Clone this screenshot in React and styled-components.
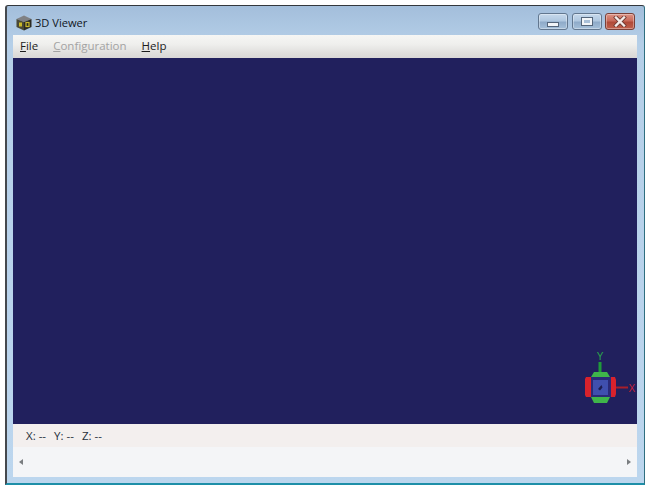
import React from 'react'
import styled, { createGlobalStyle } from 'styled-components'

const GlobalStyle = createGlobalStyle`
html, body {
    margin: 0;
    padding: 0;
    background: #fff;
}
`

const Page = styled.div`
width: 656px;
height: 489px;
box-sizing: border-box;
padding: 5px 11px 4px 5px;
overflow: hidden;
font-family: "Open Sans", "Noto Sans", sans-serif;
`

const Frame = styled.div`
height: 100%;
box-sizing: border-box;
display: flex;
flex-direction: column;
border-top: 1px solid #33373c;
border-left: 2px solid #45494e;
border-right: 1px solid #2f6f80;
border-bottom: 2px solid #1e8fa8;
border-radius: 3px 3px 0 0;
padding: 0 7px 6px 6px;
background: linear-gradient(180deg, #a3bedb 0%, #b5cfe8 8%, #b9d3ec 60%, #bcd6ee 100%);
`

const TitleBar = styled.div`
height: 29px;
flex: none;
display: flex;
align-items: center;
justify-content: space-between;
`

const TitleLeft = styled.div`
display: flex;
align-items: center;
gap: 3px;
padding: 4px 0 0 3px;
`

const TitleText = styled.span`
font-size: 11.1px;
color: #10161e;
`

const WindowButtons = styled.div`
display: flex;
gap: 3px;
padding: 2px 2px 0 0;
`

const WindowButton = styled.div`
width: 30px;
height: 17px;
box-sizing: border-box;
display: flex;
align-items: center;
justify-content: center;
border: 1px solid ${p => (p.$close ? '#7a4038' : '#62778f')};
border-radius: 3px;
background: ${p => (p.$close
        ? 'linear-gradient(180deg, #dc9284 0%, #c96a5a 45%, #b04a38 55%, #c0604c 100%)'
        : 'linear-gradient(180deg, #c6d9ec 0%, #b0c8e0 45%, #8fabc9 55%, #a5c0da 100%)')};
box-shadow: inset 0 0 0 1px rgba(255, 255, 255, .35);
&:first-child {
    margin-right: 1px;
}
`

const MinimizeGlyph = styled.div`
width: 10px;
height: 3px;
margin-top: 5px;
background: #f2f5f8;
border: 1px solid #54657a;
`

const RestoreGlyph = styled.div`
width: 6px;
height: 3px;
background: #a9c0d8;
border: 2px solid #f2f5f8;
outline: 1px solid #54657a;
`

const MenuBar = styled.div`
height: 23px;
box-sizing: border-box;
flex: none;
display: flex;
align-items: center;
gap: 15px;
padding: 0 0 2px 7px;
background: linear-gradient(180deg, #f6f6f4 0%, #efefed 40%, #dfdedc 80%, #d9d7d6 100%);
`

const MenuItem = styled.span`
font-size: 11.5px;
color: ${p => (p.$disabled ? '#a3a3a3' : '#1c1c1c')};
u {
    text-underline-offset: 1px;
}
`

const Viewport = styled.div`
flex: 1;
position: relative;
background: #21205d;
`

const Gizmo = styled.svg`
position: absolute;
right: 0;
bottom: 12px;
`

const StatusRow = styled.div`
height: 23px;
box-sizing: border-box;
flex: none;
display: flex;
align-items: center;
gap: 8px;
padding: 0 0 1px 13px;
background: #f3efee;
font-size: 11.5px;
color: #26303c;
`

const ScrollRow = styled.div`
height: 30px;
flex: none;
display: flex;
align-items: center;
justify-content: space-between;
padding: 0 6px 0 6px;
background: #f4f5f7;
`

const Arrow = styled.div`
width: 0;
height: 0;
border-top: 3px solid transparent;
border-bottom: 3px solid transparent;
${p => (p.$right ? 'border-left: 4px solid #7a7d80;' : 'border-right: 4px solid #7a7d80;')}
`

function AppIcon() {
    return (
        <svg width="16" height="16" viewBox="0 0 16 16">
            <path d="M0.5 4 L8 0.5 L15.5 4 L8 7 Z" fill="#808184" />
            <path d="M0.5 4 L8 7 L8 15.5 L0.5 12 Z" fill="#4a4935" />
            <path d="M15.5 4 L8 7 L8 15.5 L15.5 12 Z" fill="#2b2b24" />
            <rect x="3" y="7.5" width="3" height="4" fill="#c9b92a" />
            <rect x="10" y="7.5" width="3" height="4" fill="none" stroke="#c9b92a" strokeWidth="1.2" />
        </svg>
    )
}

function CloseGlyph() {
    return (
        <svg width="14" height="11" viewBox="0 0 14 11">
            <path d="M3 1.5 L11 9.5 M11 1.5 L3 9.5" stroke="#6e3a32" strokeWidth="4" strokeLinecap="square" />
            <path d="M3 1.5 L11 9.5 M11 1.5 L3 9.5" stroke="#f4ecea" strokeWidth="2.4" strokeLinecap="square" />
        </svg>
    )
}

// axis cube in the corner of the view
function AxisGizmo() {
    return (
        <Gizmo width="56" height="60" viewBox="0 0 56 60">
            <rect x="17.5" y="10" width="3" height="11" fill="#1f9a3a" />
            <path d="M10 25 L13 20 H26 L29 25 Z" fill="#3fb54a" />
            <path d="M10 45 L13 51 H26 L29 45 Z" fill="#3fb54a" />
            <path d="M10 25 H5 L4 27 V43 L5 45 H10 Z" fill="#d8222c" />
            <path d="M30 25 H34 L35 28 V42 L34 45 H30 Z" fill="#d8222c" />
            <rect x="10" y="25" width="20" height="20" fill="#2a2a78" />
            <rect x="12" y="28" width="15" height="15" fill="#3f4fae" />
            <path d="M17 37 L20.5 33 L21.5 35.5 L19 38.5 Z" fill="#1d1d50" />
            <rect x="35" y="34.5" width="12" height="2" fill="#a81f2a" />
            <text x="19" y="8" textAnchor="middle" fontSize="10" fontFamily="Liberation Sans, sans-serif" fill="#2aa84a">Y</text>
            <text x="47.5" y="39.5" fontSize="10" fontFamily="Liberation Sans, sans-serif" fill="#c9203a">X</text>
        </Gizmo>
    )
}

export default function App() {
    return (
        <Page>
            <GlobalStyle />
            <Frame>
                <TitleBar>
                    <TitleLeft>
                        <AppIcon />
                        <TitleText>3D Viewer</TitleText>
                    </TitleLeft>
                    <WindowButtons>
                        <WindowButton><MinimizeGlyph /></WindowButton>
                        <WindowButton><RestoreGlyph /></WindowButton>
                        <WindowButton $close><CloseGlyph /></WindowButton>
                    </WindowButtons>
                </TitleBar>
                <MenuBar>
                    <MenuItem><u>F</u>ile</MenuItem>
                    <MenuItem $disabled><u>C</u>onfiguration</MenuItem>
                    <MenuItem><u>H</u>elp</MenuItem>
                </MenuBar>
                <Viewport>
                    <AxisGizmo />
                </Viewport>
                <StatusRow>
                    <span>X: --</span>
                    <span>Y: --</span>
                    <span>Z: --</span>
                </StatusRow>
                <ScrollRow>
                    <Arrow />
                    <Arrow $right />
                </ScrollRow>
            </Frame>
        </Page>
    )
}
